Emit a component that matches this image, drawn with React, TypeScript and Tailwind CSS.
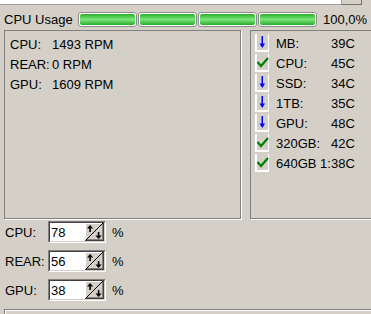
import React from "react";

const ArrowIcon = () => (
	<svg width="16" height="18" viewBox="0 0 16 18" className="shrink-0">
		<rect x="0" y="0" width="2" height="18" fill="#fff" />
		<rect x="13" y="0" width="1" height="18" fill="#fff" />
		<rect x="0" y="16" width="14" height="2" fill="#fff" />
		<rect x="6.5" y="2" width="1.5" height="9" fill="#0000ff" />
		<polygon points="4.5,9.5 10,9.5 7.25,14" fill="#0000ff" />
	</svg>
);

const CheckIcon = () => (
	<svg width="16" height="18" viewBox="0 0 16 18" className="shrink-0">
		<rect x="0" y="0" width="2" height="18" fill="#fff" />
		<rect x="13" y="0" width="1" height="18" fill="#fff" />
		<rect x="0" y="16" width="14" height="2" fill="#fff" />
		<polyline
			points="2.5,8 6,12 13,4"
			fill="none"
			stroke="#008000"
			strokeWidth="2.2"
		/>
	</svg>
);

const Spinner = () => (
	<svg width="19" height="18" viewBox="0 0 19 18" className="shrink-0">
		<rect x="0" y="0" width="19" height="18" fill="#d4d0c8" />
		<rect x="0" y="0" width="19" height="1" fill="#fff" />
		<rect x="0" y="0" width="1" height="18" fill="#fff" />
		<rect x="0" y="17" width="19" height="1" fill="#404040" />
		<rect x="18" y="0" width="1" height="18" fill="#404040" />
		<rect x="1" y="16" width="17" height="1" fill="#808080" />
		<rect x="17" y="1" width="1" height="16" fill="#808080" />
		<line x1="1" y1="17" x2="18" y2="0" stroke="#000" strokeWidth="1" />
		{/* up arrow */}
		<rect x="4.3" y="4" width="1.6" height="5" fill="#000" />
		<polygon points="2,5.5 8.2,5.5 5.1,2" fill="#000" />
		{/* down arrow */}
		<rect x="12.8" y="9" width="1.6" height="5" fill="#000" />
		<polygon points="10.5,12.5 16.7,12.5 13.6,16" fill="#000" />
	</svg>
);

const Bar = () => (
	<div className="w-[59px] h-[15px] shrink-0 rounded-[3px] border border-[#8c8c8c] bg-white p-[1px]">
		<div className="h-full rounded-[2px] bg-linear-to-b from-[#22ac22] via-[#7ae67a] to-[#22ac22]" />
	</div>
);

const temps = [
	{ ok: false, name: "MB:", val: "39C" },
	{ ok: true, name: "CPU:", val: "45C" },
	{ ok: false, name: "SSD:", val: "34C" },
	{ ok: false, name: "1TB:", val: "35C" },
	{ ok: false, name: "GPU:", val: "48C" },
	{ ok: true, name: "320GB:", val: "42C" },
	{ ok: true, name: "640GB 1:", val: "38C" },
];

const fans = [
	{ name: "CPU:", val: "1493 RPM" },
	{ name: "REAR:", val: "0 RPM" },
	{ name: "GPU:", val: "1609 RPM" },
];

const speeds = [
	{ name: "CPU:", val: "78" },
	{ name: "REAR:", val: "56" },
	{ name: "GPU:", val: "38" },
];

export default function App() {
	return (
		<div className="w-[371px] h-[314px] overflow-hidden bg-[#d4d0c8] text-black text-[13px] leading-none font-['Liberation_Sans',Arial,sans-serif] flex flex-col">
			{/* top strip */}
			<div className="flex h-[5px] shrink-0">
				<div className="w-[342px] bg-white border-b border-r border-[#a0a0a0]" />
				<div className="w-[20px] border-b border-r border-[#707070] bg-[#d4d0c8]" />
			</div>

			{/* cpu usage */}
			<div className="flex items-center h-[15px] mt-[7px] pl-[4px] shrink-0">
				<span className="w-[74px] shrink-0">CPU Usage</span>
				<div className="flex gap-[1px]">
					<Bar />
					<Bar />
					<Bar />
					<Bar />
				</div>
				<span className="ml-[6px]">100,0%</span>
			</div>

			{/* panels */}
			<div className="flex gap-[9px] pl-[4px] mt-[3px] shrink-0">
				<div className="w-[237px] h-[189px] shrink-0 border border-[#808080] shadow-[1px_1px_0_#fff] pt-[3px] pl-[5px]">
					{fans.map((f) => (
						<div key={f.name} className="flex items-center h-[20px]">
							<span className="w-[42px]">{f.name}</span>
							<span>{f.val}</span>
						</div>
					))}
				</div>
				<div className="w-[140px] h-[189px] shrink-0 border border-[#808080] shadow-[1px_1px_0_#fff] pt-[2px] pl-[4px]">
					{temps.map((t) => (
						<div key={t.name} className="flex items-center h-[20px]">
							{t.ok ? <CheckIcon /> : <ArrowIcon />}
							<span className="w-[55px] ml-[5px]">{t.name}</span>
							<span>{t.val}</span>
						</div>
					))}
				</div>
			</div>

			{/* fan speed spinners */}
			<div className="flex flex-col gap-[7px] mt-[2px] pl-[5px] shrink-0">
				{speeds.map((s) => (
					<div key={s.name} className="flex items-center h-[22px]">
						<span className="w-[43px]">{s.name}</span>
						<div className="border-t border-l border-[#808080] border-b border-r border-b-white border-r-white">
							<div className="flex border-t border-l border-[#404040] border-b border-r border-b-[#d4d0c8] border-r-[#d4d0c8]">
								<div className="w-[35px] h-[18px] bg-white pl-[1px] flex items-center">
									{s.val}
								</div>
								<Spinner />
							</div>
						</div>
						<span className="ml-[6px]">%</span>
					</div>
				))}
			</div>

			{/* next group box */}
			<div className="mt-[8px] ml-[4px] h-[10px] border-t border-l border-[#808080] shadow-[inset_1px_1px_0_#fff] shrink-0" />
		</div>
	);
}
